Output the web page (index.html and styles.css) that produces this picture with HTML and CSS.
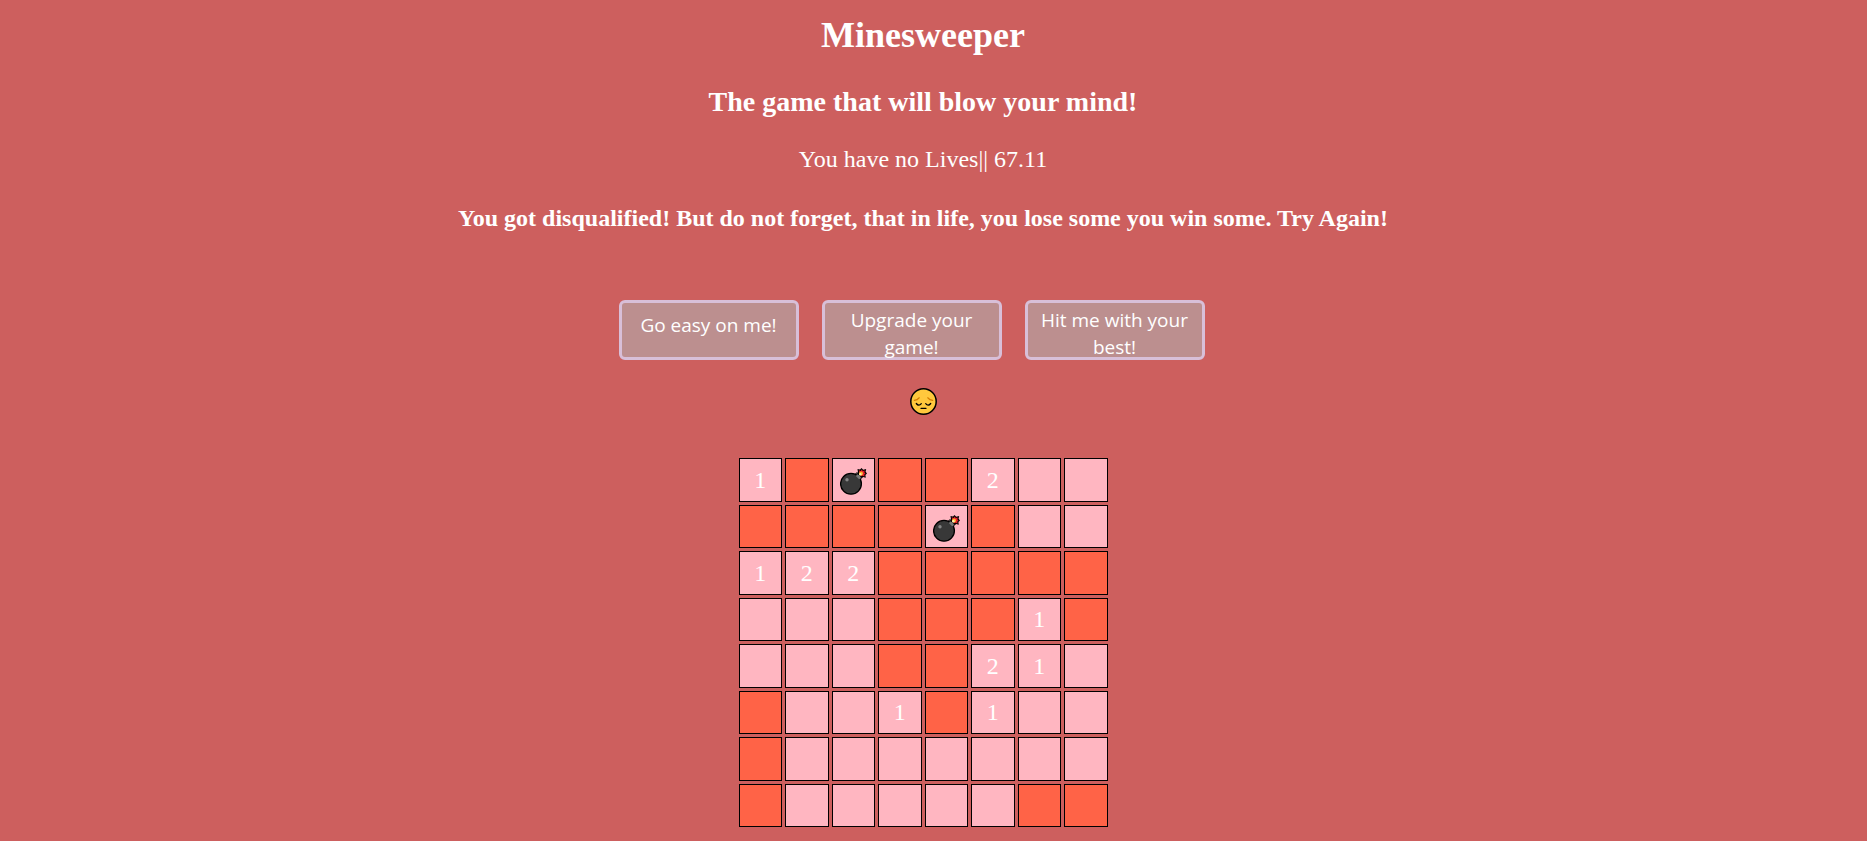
FILE: index.html
```
<!DOCTYPE html>
<html lang="en">
<head>
<meta charset="utf-8">
<title>Minesweeper</title>
<link rel="stylesheet" href="styles.css">
</head>
<body>
<svg class="sprites" aria-hidden="true">
  <symbol id="bomb" viewBox="0 0 27 27">
    <path d="M14.500 7l2.500-2.500 5 5-2.500 2.500z" fill="#777" stroke="#000" stroke-width="1"/>
    <circle cx="11" cy="15.800" r="10.400" fill="#383838" stroke="#000" stroke-width="1.300"/>
    <circle cx="7" cy="11.700" r="1.700" fill="#858585"/>
    <path d="M15.800 8l2-2 3.500 3.500-2 2z" fill="#777"/>
    <path d="M17.500 1l2.500.6L21.500 0l1.700 1.800 3-.8-.6 2.700L27 5.500l-1.600 1.500.4 2.700-2.700-.6-2 1-1.200-2.600L17 6.300l1-1.800z" fill="#000"/>
    <path d="M18.700 2.300l2.100.7.800-1.500 1.200 1.500 2-.6-.5 1.900 1.200 1.200-1.200 1 .2 1.900-1.900-.6-1.700.5-.5-1.900-1.700-.6.9-1z" fill="#e8202a"/>
    <circle cx="21" cy="5.500" r="2" fill="#ffb52e"/>
    <circle cx="20.300" cy="6.300" r="1.200" fill="#fff3b0"/>
  </symbol>
</svg>
<main class="page">
  <h1 class="title">Minesweeper</h1>
  <h2 class="tagline">The game that will blow your mind!</h2>
  <p class="status">You have no Lives|| 67.11</p>
  <h3 class="message">You got disqualified! But do not forget, that in life, you lose some you win some. Try Again!</h3>
  <div class="levels">
    <button class="level level-short" type="button">Go easy on me!</button>
    <button class="level" type="button">Upgrade your game!</button>
    <button class="level" type="button">Hit me with your best!</button>
  </div>
  <button class="face" type="button" aria-label="Restart">
    <svg class="face-icon" viewBox="0 0 27 27" aria-hidden="true">
      <circle cx="13.500" cy="13.500" r="12.700" fill="#ffc83d" stroke="#000" stroke-width="1.500"/>
      <g fill="none" stroke-linecap="round">
        <path d="M4.300 12.300q3.200-.3 4.800-2.500M22.700 12.300q-3.200-.3-4.800-2.500" stroke="#d67d00" stroke-width="1.300"/>
        <path d="M6.300 15.500q2.500 3.300 5 .2M15.700 15.700q2.500 3.100 5-.2M11 20.300h5" stroke="#000" stroke-width="1.300"/>
      </g>
    </svg>
  </button>
  <div class="board" id="board"></div>
</main>
<script src="board.js"></script>
</body>
</html>
```

FILE: styles.css
```
body {
  margin: 0;
  background: #cd5f5e;
  color: white;
  font-family: "Liberation Serif", "Times New Roman", serif;
  font-size: 24px;
}

button {
  color: inherit;
  font: inherit;
  cursor: pointer;
}

.sprites {
  display: none;
}

.page {
  display: flex;
  flex-direction: column;
  align-items: center;
  padding: 14px 21px 8px 0;
  text-align: center;
}

.title,
.tagline,
.status,
.message {
  margin: 0;
}

.title {
  font-size: 36px;
  line-height: 42px;
}

.tagline {
  margin-top: 30px;
  font-size: 28px;
  line-height: 32px;
}

.status {
  margin-top: 27px;
  line-height: 28px;
}

.message {
  margin-top: 31px;
  font-size: 24px;
  line-height: 28px;
}

.levels {
  display: flex;
  gap: 23px;
  margin-top: 68px;
  padding-right: 23px;
}

.level {
  display: flex;
  align-items: flex-start;
  justify-content: center;
  box-sizing: border-box;
  width: 180px;
  height: 60px;
  padding: 4px 12px 0;
  border: 3px solid thistle;
  border-radius: 6px;
  background: rosybrown;
  font-family: "Open Sans", "Noto Sans", sans-serif;
  font-size: 19px;
  line-height: 27px;
}

.level-short {
  padding-top: 9px;
}

.face {
  margin-top: 28px;
  padding: 0;
  border: 0;
  background: none;
}

.face-icon {
  display: block;
  width: 27px;
  height: 27px;
}

.board {
  display: grid;
  grid-template-columns: repeat(8, 1fr);
  grid-auto-rows: 1fr;
  gap: 3px;
  width: 369px;
  margin-top: 43px;
}

.cell {
  display: flex;
  align-items: center;
  justify-content: center;
  box-sizing: border-box;
  min-width: 0;
  aspect-ratio: 1;
  padding: 0;
  border: 1px solid black;
  background: tomato;
  line-height: 28px;
}

.cell-open {
  background: lightpink;
}

.bomb {
  width: 27px;
  height: 27px;
  margin-top: 4px;
}
```

FILE: board.js
```
// "#" is a covered cell, "." an open empty one, "*" a mine, digits count neighbouring mines.
const rows = [
  "1#*##2..",
  "####*#..",
  "122#####",
  "...###1#",
  "...##21.",
  "#..1#1..",
  "#.......",
  "#.....##"
];

const board = document.getElementById("board");

for (const row of rows) {
  for (const mark of row) {
    const cell = document.createElement("button");
    cell.type = "button";
    cell.className = mark === "#" ? "cell" : "cell cell-open";
    if (mark === "*") {
      cell.setAttribute("aria-label", "Mine");
      cell.innerHTML = '<svg class="bomb" aria-hidden="true"><use href="#bomb"/></svg>';
    } else if (mark !== "#" && mark !== ".") {
      cell.textContent = mark;
    }
    board.append(cell);
  }
}
```
